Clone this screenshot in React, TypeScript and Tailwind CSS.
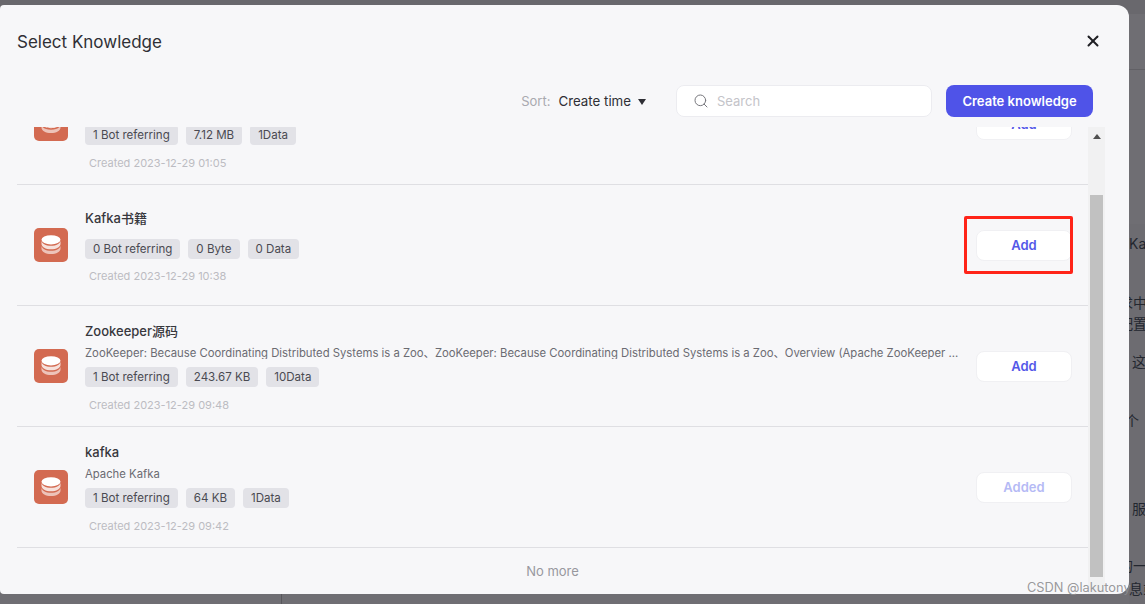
import React from 'react';
import { X, Search } from 'lucide-react';

interface Knowledge {
  name: string;
  desc?: string;
  tags: string[];
  created: string;
  added?: boolean;
}

const ITEMS: Knowledge[] = [
  {
    name: '架构设计',
    desc: 'Architecture notes',
    tags: ['1 Bot referring', '7.12 MB', '1Data'],
    created: 'Created 2023-12-29 01:05',
  },
  {
    name: 'Kafka书籍',
    tags: ['0 Bot referring', '0 Byte', '0 Data'],
    created: 'Created 2023-12-29 10:38',
  },
  {
    name: 'Zookeeper源码',
    desc: 'ZooKeeper: Because Coordinating Distributed Systems is a Zoo、ZooKeeper: Because Coordinating Distributed Systems is a Zoo、Overview (Apache ZooKeeper ...',
    tags: ['1 Bot referring', '243.67 KB', '10Data'],
    created: 'Created 2023-12-29 09:48',
  },
  {
    name: 'kafka',
    desc: 'Apache Kafka',
    tags: ['1 Bot referring', '64 KB', '1Data'],
    created: 'Created 2023-12-29 09:42',
    added: true,
  },
];

const PAGE_TEXT = [
  { text: 'Kaf', cls: 'top-[235px] left-[1129px]' },
  { text: '求中', cls: 'top-[294px] left-[1119px]' },
  { text: '配置', cls: 'top-[315px] left-[1119px]' },
  { text: '这', cls: 'top-[353px] left-[1132px]' },
  { text: '个', cls: 'top-[412px] left-[1125px]' },
  { text: '服', cls: 'top-[500px] left-[1132px]' },
  { text: '的一', cls: 'top-[557px] left-[1119px]' },
  { text: '息或', cls: 'top-[580px] left-[1129px]' },
];

const DbIcon = () => (
  <div className="w-[34px] h-[34px] shrink-0 rounded-[5px] bg-[#d36a51] flex items-center justify-center">
    <svg width="22" height="22" viewBox="0 0 22 22" fill="none">
      <path d="M1.500 11.500v3.200C1.500 17.600 5.700 20 11 20s9.500-2.400 9.500-5.300v-3.200C20.500 14.400 16.300 16.800 11 16.800S1.500 14.400 1.500 11.500Z" fill="#fff" fillOpacity="0.6" />
      <path d="M1.500 6.500v3.400C1.500 12.800 5.700 15.200 11 15.200s9.500-2.400 9.500-5.300V6.500C20.500 9.400 16.300 11.800 11 11.800S1.500 9.400 1.500 6.500Z" fill="#fff" fillOpacity="0.8" />
      <ellipse cx="11" cy="5.800" rx="9.500" ry="4.600" fill="#fff" />
    </svg>
  </div>
);

const Row = ({ item }: { item: Knowledge }) => (
  <div className="h-[121px] border-b border-[#dfdfe3] pl-[17px] pr-[16px] flex items-center gap-[17px]">
    <DbIcon />
    <div className="flex-1 min-w-0 pt-[2px]">
      <div className={`h-[20px] leading-[20px] text-[13px] font-medium text-[#37373d] ${item.desc ? '' : '-mt-[1px]'}`}>{item.name}</div>
      {item.desc ? (
        <div className="mt-[4px] h-[14px] overflow-hidden whitespace-nowrap leading-[17px] text-[11.300px] text-[#6b6b72]">{item.desc}</div>
      ) : null}
      <div className={`flex gap-[8px] ${item.desc ? 'mt-[8px]' : 'mt-[11px]'}`}>
        {item.tags.map((tag) => (
          <span key={tag} className="h-[20px] px-[8px] rounded-[4px] bg-[#e2e2e7] text-[11.550px] leading-[21px] text-[#4a4a52]">
            {tag}
          </span>
        ))}
      </div>
      <div className={`pl-[4px] text-[11px] leading-[16px] text-[#bcbcc2] ${item.desc ? 'mt-[10px]' : 'mt-[9px]'}`}>
        {item.created}
      </div>
    </div>
    <button className={`w-[96px] h-[31px] shrink-0 rounded-[8px] bg-white border border-[#f0f0f3] pt-[1px] text-[13px] font-semibold ${item.added ? 'text-[#b5baf5]' : 'text-[#5458e8]'}`}>
      {item.added ? 'Added' : 'Add'}
    </button>
  </div>
);

export default function App() {
  return (
    <div className="relative w-[1145px] h-[604px] overflow-hidden bg-[#6f6e73] pt-[5px] font-['Inter','Noto_Sans_CJK_SC',sans-serif]">
      {/* dimmed page behind the dialog */}
      <div className="absolute top-0 left-0 w-full h-[14px] bg-[#69686d]" />
      <div className="absolute top-[69px] left-[1129px] w-[16px] h-px bg-[#616065]" />
      <div className="absolute top-[224px] left-[1129px] w-[16px] h-[380px] bg-[#6d6c71]" />
      <div className="absolute top-[594px] left-[281px] w-px h-[10px] bg-[#58575c]" />
      {PAGE_TEXT.map((p) => (
        <span key={p.text} className={`absolute ${p.cls} text-[14px] leading-[18px] text-[#23272f] whitespace-nowrap`}>
          {p.text}
        </span>
      ))}

      <div className="relative w-[1129px] h-[589px] flex flex-col bg-[#f7f7f9] rounded-l-[4px] rounded-r-[12px] overflow-hidden">
        <div className="h-[74px] shrink-0 pl-[17px] pr-[27px] flex items-center justify-between">
          <span className="pt-[2px] text-[17px] text-[#2f2f35]">Select Knowledge</span>
          <X size={18} strokeWidth={2.600} className="text-[#1f1f24] -mt-[2px]" />
        </div>

        <div className="h-[32px] mt-[6px] shrink-0 pr-[36px] flex items-center justify-end">
          <span className="pt-[2px] text-[13px] text-[#a9a9af]">Sort:</span>
          <span className="ml-[8px] pt-[2px] text-[13.300px] text-[#2f2f35]">Create time</span>
          <svg width="8" height="6" viewBox="0 0 8 6" className="ml-[7px] mt-[2px]">
            <path d="M0 0h8L4 6Z" fill="#2f2f35" />
          </svg>
          <div className="ml-[30px] w-[256px] h-[32px] rounded-[8px] bg-white border border-[#ececf0] pl-[16px] flex items-center gap-[8px]">
            <Search size={16} strokeWidth={1.500} className="text-[#77777d]" />
            <span className="pt-[1px] text-[13px] text-[#c4c4c9]">Search</span>
          </div>
          <button className="ml-[14px] w-[147px] h-[32px] rounded-[8px] bg-[#4f53e8] pt-[1px] text-white text-[13px] font-semibold">
            Create knowledge
          </button>
        </div>

        <div className="mt-[10px] flex-1 min-h-0 flex pl-[17px]">
          <div className="w-[1071px] overflow-hidden">
            <div className="-mt-[63px]">
              {ITEMS.map((item) => (
                <Row key={item.created} item={item} />
              ))}
              <div className="h-[47px] flex items-center justify-center text-[13px] text-[#98989e]">No more</div>
            </div>
          </div>
          <div className="w-[17px] bg-[#f1f1f2] flex flex-col items-center">
            <svg width="8" height="5" viewBox="0 0 8 5" className="mt-[7px]">
              <path d="M4 0l4 5H0Z" fill="#505050" />
            </svg>
            <div className="mt-[56px] w-[13px] h-[382px] bg-[#c1c1c1]" />
          </div>
        </div>

        {/* red annotation box from the screenshot */}
        <div className="absolute left-[964px] top-[211px] w-[109px] h-[58px] rounded-[2px] border-[3px] border-[#ff2419]" />
      </div>

      <span className="absolute left-[1027px] top-[579px] text-[12.800px] leading-[17px] text-[#8d8d90]/90 whitespace-nowrap">
        CSDN @lakutony
      </span>
    </div>
  );
}
